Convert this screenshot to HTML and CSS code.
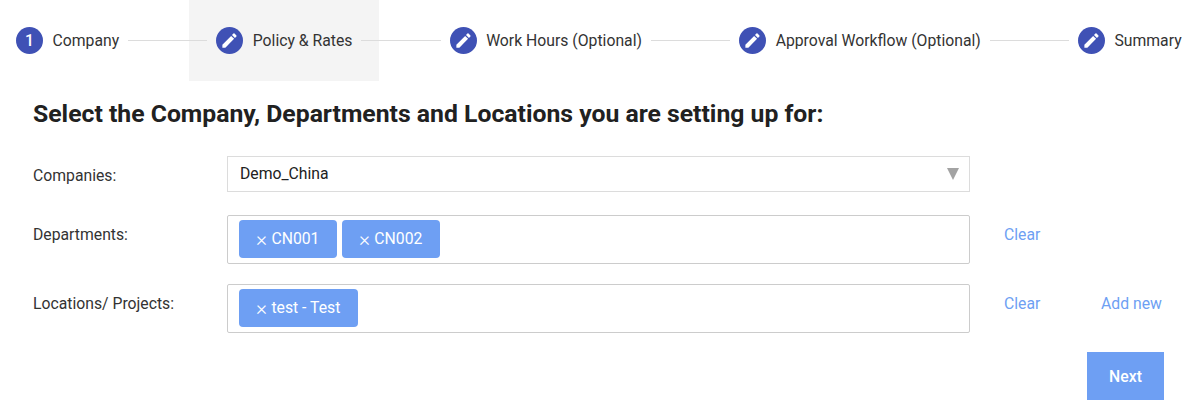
FILE: index.html
```html
<!DOCTYPE html>
<html lang="en">
<head>
    <meta charset="UTF-8">
    <meta name="viewport" content="width=device-width, initial-scale=1.0">
    <title>Setup</title>
    <link rel="stylesheet" href="styles.css">
</head>
<body>
    <div class="stepper">
        <div class="step">
            <span class="step-icon">1</span>
            <span class="step-label">Company</span>
        </div>
        <div class="step-line"></div>
        <div class="step step-active">
            <span class="step-icon"><svg viewBox="0 0 24 24"><path d="M3 17.25V21h3.75L17.81 9.94l-3.75-3.75L3 17.25zM20.71 7.04a1 1 0 0 0 0-1.41l-2.34-2.34a1 1 0 0 0-1.41 0l-1.83 1.83 3.75 3.75 1.83-1.83z"/></svg></span>
            <span class="step-label">Policy &amp; Rates</span>
        </div>
        <div class="step-line"></div>
        <div class="step">
            <span class="step-icon"><svg viewBox="0 0 24 24"><path d="M3 17.25V21h3.75L17.81 9.94l-3.75-3.75L3 17.25zM20.71 7.04a1 1 0 0 0 0-1.41l-2.34-2.34a1 1 0 0 0-1.41 0l-1.83 1.83 3.75 3.75 1.83-1.83z"/></svg></span>
            <span class="step-label">Work Hours (Optional)</span>
        </div>
        <div class="step-line"></div>
        <div class="step">
            <span class="step-icon"><svg viewBox="0 0 24 24"><path d="M3 17.25V21h3.75L17.81 9.94l-3.75-3.75L3 17.25zM20.71 7.04a1 1 0 0 0 0-1.41l-2.34-2.34a1 1 0 0 0-1.41 0l-1.83 1.83 3.75 3.75 1.83-1.83z"/></svg></span>
            <span class="step-label">Approval Workflow (Optional)</span>
        </div>
        <div class="step-line"></div>
        <div class="step">
            <span class="step-icon"><svg viewBox="0 0 24 24"><path d="M3 17.25V21h3.75L17.81 9.94l-3.75-3.75L3 17.25zM20.71 7.04a1 1 0 0 0 0-1.41l-2.34-2.34a1 1 0 0 0-1.41 0l-1.83 1.83 3.75 3.75 1.83-1.83z"/></svg></span>
            <span class="step-label">Summary</span>
        </div>
    </div>

    <div class="content">
        <h1>Select the Company, Departments and Locations you are setting up for:</h1>

        <div class="form-row row-company">
            <label>Companies:</label>
            <div class="select-box">
                <span>Demo_China</span>
                <span class="select-arrow"></span>
            </div>
        </div>

        <div class="form-row row-departments">
            <label>Departments:</label>
            <div class="tag-box">
                <span class="tag"><span class="tag-x">×</span> CN001</span>
                <span class="tag"><span class="tag-x">×</span> CN002</span>
            </div>
            <div class="row-links">
                <a class="link link-clear">Clear</a>
            </div>
        </div>

        <div class="form-row row-locations">
            <label>Locations/ Projects:</label>
            <div class="tag-box">
                <span class="tag"><span class="tag-x">×</span> test - Test</span>
            </div>
            <div class="row-links">
                <a class="link link-clear">Clear</a>
                <a class="link">Add new</a>
            </div>
        </div>

        <div class="actions">
            <button class="next-btn">Next</button>
        </div>
    </div>
</body>
</html>
```

FILE: styles.css
```css
html, body {
    overflow: hidden;
}

body {
    margin: 0;
    font-family: Roboto, sans-serif;
    font-size: 15.75px;
    color: #212121;
    background: white;
}

/* Stepper */
.stepper {
    display: flex;
    align-items: center;
    height: 81px;
    width: 1219.6px;
    margin-left: -11px;
}

.step {
    display: flex;
    align-items: center;
    gap: 9.5px;
    height: 81px;
    padding: 0 27px;
    flex-shrink: 0;
    box-sizing: border-box;
}

.step-active {
    background: #f4f4f4;
}

.step-icon {
    width: 27px;
    height: 27px;
    border-radius: 50%;
    background: #3f51b5;
    color: white;
    font-size: 15.75px;
    font-weight: 500;
    display: flex;
    align-items: center;
    justify-content: center;
}

.step-icon svg {
    width: 19px;
    height: 19px;
    fill: white;
}

.step-label {
    color: #333;
    white-space: nowrap;
}

.step-line {
    flex: 1;
    height: 1px;
    background: #dcdcdc;
    margin: 0 -18px;
    position: relative;
}

/* Form */
.content {
    padding: 0 29px 0 33px;
}

h1 {
    font-size: 24.75px;
    font-weight: 700;
    line-height: 30px;
    margin: 18px 0 27px;
    color: #212121;
}

.form-row {
    display: flex;
    align-items: flex-start;
}

.form-row label {
    width: 194px;
    flex-shrink: 0;
    padding-top: 10px;
    color: #333;
}

.row-company {
    height: 59px;
}

.row-departments {
    height: 69px;
}

.row-locations {
    height: 68px;
}

.select-box {
    width: 743px;
    height: 36px;
    box-sizing: border-box;
    border: 1px solid #dcdcdc;
    padding: 0 10px 2px 12px;
    display: flex;
    align-items: center;
    justify-content: space-between;
}

.select-arrow {
    width: 0;
    height: 0;
    border-left: 6px solid transparent;
    border-right: 6px solid transparent;
    border-top: 12px solid #a3a3a3;
    margin-top: 2px;
}

.tag-box {
    width: 743px;
    height: 49px;
    box-sizing: border-box;
    border: 1px solid #ccc;
    border-radius: 2px;
    padding: 4px 11px;
    display: flex;
    gap: 5px;
}

.tag {
    height: 38px;
    box-sizing: border-box;
    padding: 0 17.5px 2px 17px;
    background: #6e9ff3;
    color: white;
    border-radius: 4px;
    display: flex;
    align-items: center;
    gap: 4.4px;
    white-space: nowrap;
}

.tag-x {
    font-size: 21px;
    font-weight: 300;
    line-height: 1;
    margin-top: 3px;
}

.row-links {
    display: flex;
    padding-top: 10px;
    padding-left: 34px;
}

.link {
    color: #6e9ff3;
    white-space: nowrap;
}

.link-clear {
    width: 97px;
}

.actions {
    display: flex;
    justify-content: flex-end;
}

.next-btn {
    width: 77px;
    height: 48px;
    background: #6e9ff3;
    color: white;
    border: none;
    font-family: Roboto, sans-serif;
    font-size: 15.75px;
    font-weight: 500;
}
```
